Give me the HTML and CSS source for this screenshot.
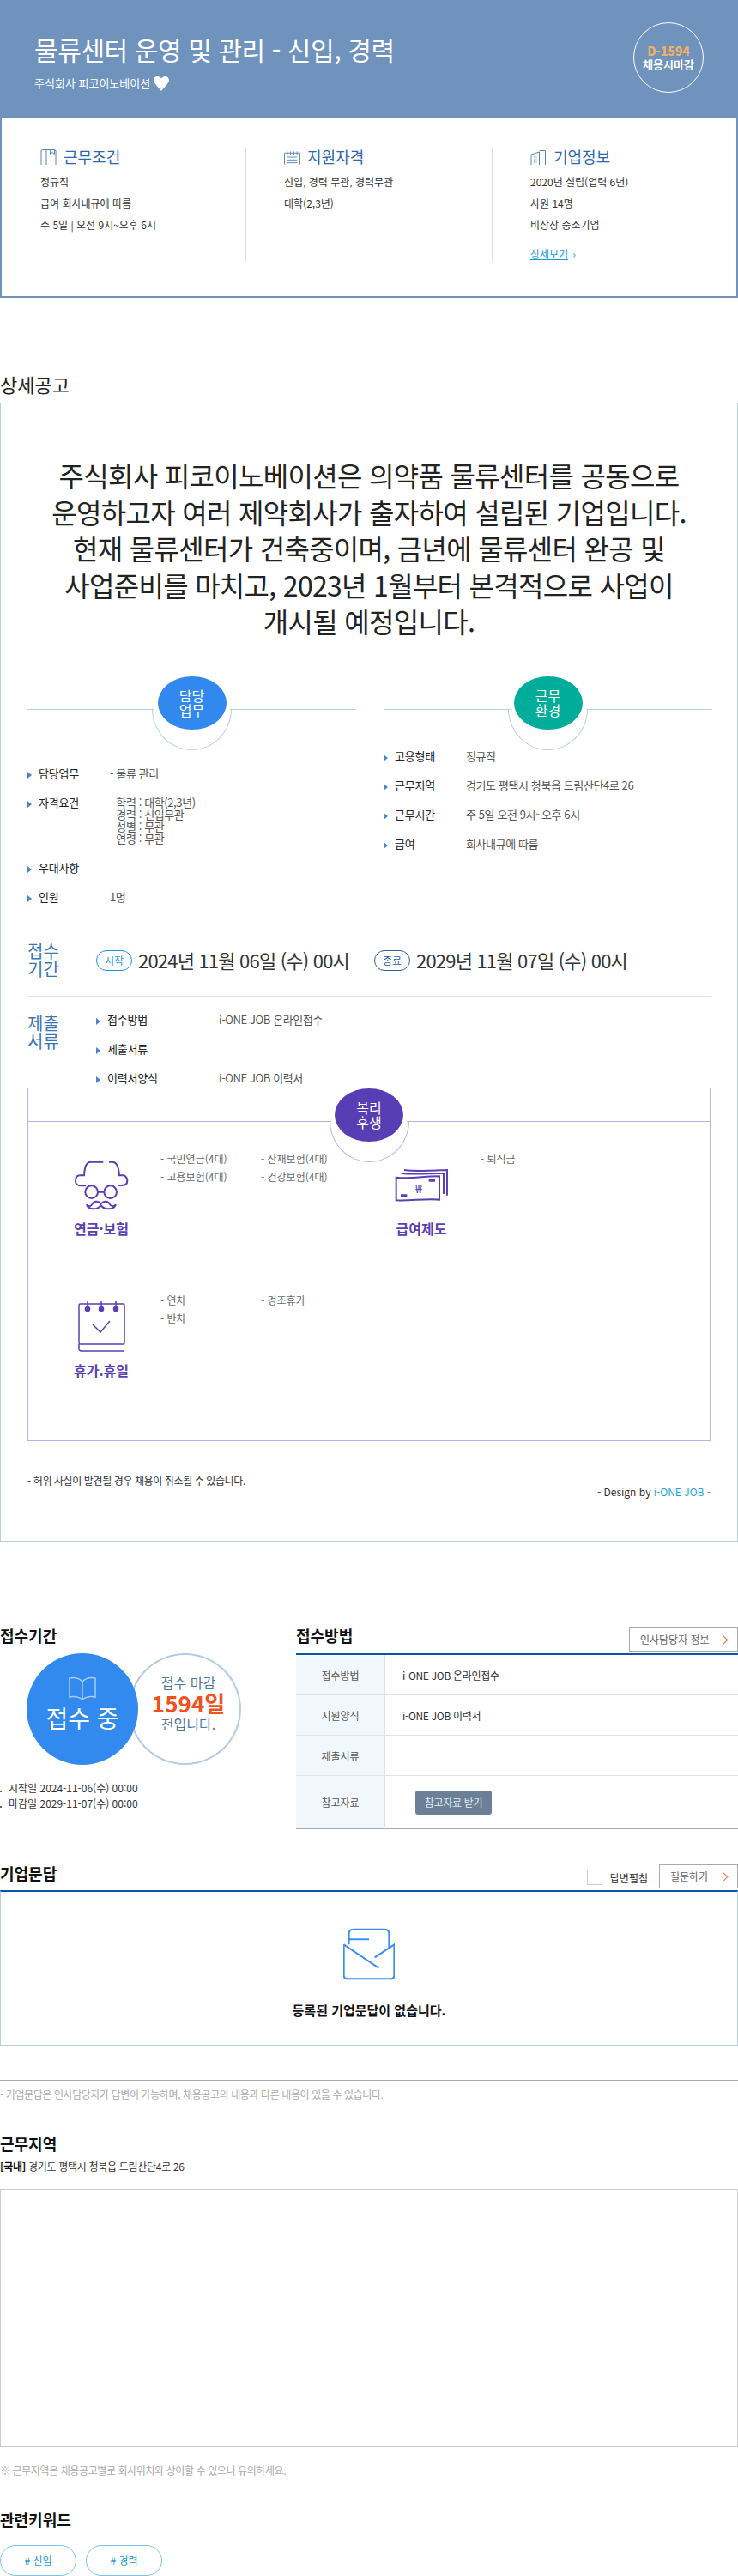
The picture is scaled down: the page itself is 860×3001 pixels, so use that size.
FILE: index.html
```html
<!DOCTYPE html>
<html lang="ko">
<head>
  <meta charset="UTF-8"/>
  <meta name="viewport" content="width=device-width,initial-scale=1.0"/>
  <title>물류센터 운영 및 관리 - 신입, 경력</title>
  <link rel="stylesheet" href="styles.css">
</head>
<body>

<header class="job-head">
  <div class="job-title">
    <h1>물류센터 운영 및 관리 - 신입, 경력</h1>
    <p class="company">주식회사 피코이노베이션
      <svg class="heart" viewBox="0 0 18 17"><path d="M9 17C6 13 0 8 0 4.500C0 1.800 2 0 4.500 0C6.500 0 8 1 9 2.500C10 1 11.500 0 13.500 0C16 0 18 1.800 18 4.500C18 8 12 13 9 17Z"/></svg>
    </p>
  </div>
  <div class="dday"><strong>D-1594</strong><span>채용시마감</span></div>
</header>

<section class="summary">
  <div class="summary-col">
    <h2>
      <svg class="sum-icon" viewBox="0 0 18 18"><path d="M.5 18V2Q.5.500 2 .500H16Q17.500.500 17.500 2V18M6.500.500V18M11 .500V5.500L13.500 3.500L16 5.500V.500"/></svg>
      근무조건
    </h2>
    <ul>
      <li>정규직</li>
      <li>급여 회사내규에 따름</li>
      <li>주 5일 | 오전 9시~오후 6시</li>
    </ul>
  </div>
  <div class="summary-col">
    <h2>
      <svg class="sum-icon" viewBox="0 0 20 18"><path d="M.5 18V4H19.500V18M4 2V6M8 2V6M12 2V6M16 2V6M4 9H16M4 12.500H16M4 16H16"/></svg>
      지원자격
    </h2>
    <ul>
      <li>신입, 경력 무관, 경력무관</li>
      <li>대학(2,3년)</li>
    </ul>
  </div>
  <div class="summary-col">
    <h2>
      <svg class="sum-icon" viewBox="0 0 18 18"><path d="M.5 18V6L10 3V18M10 1.500H17V18M3.500 9H4.500M6 9H7M3.500 12H4.500M6 12H7M3.500 15H4.500M6 15H7"/></svg>
      기업정보
    </h2>
    <ul>
      <li>2020년 설립(업력 6년)</li>
      <li>사원 14명</li>
      <li>비상장 중소기업</li>
    </ul>
    <a class="more" href="#">상세보기</a><span class="more-arrow">›</span>
  </div>
</section>

<h2 class="detail-title">상세공고</h2>
<section class="detail">
  <p class="lead">주식회사 피코이노베이션은 의약품 물류센터를 공동으로<br>운영하고자 여러 제약회사가 출자하여 설립된 기업입니다.<br>현재 물류센터가 건축중이며, 금년에 물류센터 완공 및<br>사업준비를 마치고, 2023년 1월부터 본격적으로 사업이<br>개시될 예정입니다.</p>

  <div class="duty-cols">
    <div class="duty">
      <div class="bubble-head">
        <span class="rule"></span>
        <span class="arc"></span>
        <span class="bubble">담당<br>업무</span>
        <span class="rule"></span>
      </div>
      <ul class="rows rows-left">
        <li><b>담당업무</b><span>- 물류 관리</span></li>
        <li><b>자격요건</b><span class="stack">- 학력 : 대학(2,3년)<br>- 경력 : 신입무관<br>- 성별 : 무관<br>- 연령 : 무관</span></li>
        <li><b>우대사항</b><span></span></li>
        <li><b>인원</b><span>1명</span></li>
      </ul>
    </div>
    <div class="duty">
      <div class="bubble-head">
        <span class="rule"></span>
        <span class="arc"></span>
        <span class="bubble bubble-teal">근무<br>환경</span>
        <span class="rule"></span>
      </div>
      <ul class="rows">
        <li><b>고용형태</b><span>정규직</span></li>
        <li><b>근무지역</b><span>경기도 평택시 청북읍 드림산단4로 26</span></li>
        <li><b>근무시간</b><span>주 5일 오전 9시~오후 6시</span></li>
        <li><b>급여</b><span>회사내규에 따름</span></li>
      </ul>
    </div>
  </div>

  <div class="period">
    <h3 class="side-label">접수<br>기간</h3>
    <span class="badge">시작</span>
    <span class="period-date">2024년 11월 06일 (수) 00시</span>
    <span class="badge badge-end">종료</span>
    <span class="period-date">2029년 11월 07일 (수) 00시</span>
  </div>

  <div class="docs">
    <h3 class="side-label">제출<br>서류</h3>
    <ul class="rows rows-docs">
      <li><b>접수방법</b><span>i-ONE JOB 온라인접수</span></li>
      <li><b>제출서류</b><span></span></li>
      <li><b>이력서양식</b><span>i-ONE JOB 이력서</span></li>
    </ul>
  </div>

  <div class="benefit">
    <div class="bubble-head bubble-head-purple">
      <span class="rule"></span>
      <span class="arc"></span>
      <span class="bubble bubble-purple">복리<br>후생</span>
      <span class="rule"></span>
    </div>
    <div class="benefit-grid">
      <div class="benefit-cell">
        <div class="benefit-type">
          <svg viewBox="0 0 120 82">
            <g transform="translate(3 2) scale(.3333)">
              <path d="M178 38H135C118 38 113 55 111 85H97C84 85 81 95 81 104C81 115 90 121 100 121H118M198 38H210C225 38 232 55 234 85H248C258 88 262 95 262 104C262 115 252 120 240 120H228"/>
              <circle cx="137" cy="143" r="22"/>
              <circle cx="203" cy="143" r="22"/>
              <path d="M159 143H181M170 184C160 172 145 175 140 185C135 195 125 195 120 187C125 205 155 208 170 190C185 208 215 205 222 187C215 195 205 195 200 185C195 175 180 172 170 184Z"/>
            </g>
          </svg>
          <strong>연금·보험</strong>
        </div>
        <ul class="benefit-list">
          <li>- 국민연금(4대)</li><li>- 산재보험(4대)</li>
          <li>- 고용보험(4대)</li><li>- 건강보험(4대)</li>
        </ul>
      </div>
      <div class="benefit-cell">
        <div class="benefit-type">
          <svg viewBox="0 0 120 82">
            <g transform="translate(10 2) scale(.3333)">
              <path d="M62 92C110 98 160 88 213 88V170C165 165 110 175 62 172ZM80 78C130 82 175 78 228 78V150M90 66C140 72 190 68 240 66V155"/>
              <path class="thick" d="M176 103H198M78 155H100"/>
              <text x="141" y="146" text-anchor="middle">₩</text>
            </g>
          </svg>
          <strong>급여제도</strong>
        </div>
        <ul class="benefit-list">
          <li>- 퇴직금</li>
        </ul>
      </div>
      <div class="benefit-cell">
        <div class="benefit-type">
          <svg viewBox="0 0 120 82">
            <rect x="34" y="15" width="53" height="47" rx="1.500"/>
            <path d="M34 62V67Q34 70 37 70H87M44 12V22M60 12V22M77 12V22M50 39L59 48L70 35"/>
            <circle class="dot" cx="44" cy="21" r="2.500"/>
            <circle class="dot" cx="60" cy="21" r="2.500"/>
            <circle class="dot" cx="77" cy="21" r="2.500"/>
          </svg>
          <strong>휴가.휴일</strong>
        </div>
        <ul class="benefit-list">
          <li>- 연차</li><li>- 경조휴가</li>
          <li>- 반차</li>
        </ul>
      </div>
    </div>
  </div>

  <div class="detail-foot">
    <p class="false-note">- 허위 사실이 발견될 경우 채용이 취소될 수 있습니다.</p>
    <p class="design">- Design by <em>i-ONE JOB -</em></p>
  </div>
</section>

<section class="apply">
  <div class="apply-period">
    <h2 class="sec-title">접수기간</h2>
    <div class="circles">
      <div class="circle-on">
        <svg class="book" viewBox="0 0 32 28"><path d="M16 6C12 2 6 1 1 2V24C6 23 12 24 16 27C20 24 26 23 31 24V2C26 1 20 2 16 6ZM16 6V27"/></svg>
        <span>접수 중</span>
      </div>
      <div class="circle-left">
        <span>접수 마감</span>
        <strong>1594일</strong>
        <span>전입니다.</span>
      </div>
    </div>
    <ul class="apply-dates">
      <li>시작일 2024-11-06(수) 00:00</li>
      <li>마감일 2029-11-07(수) 00:00</li>
    </ul>
  </div>
  <div class="apply-how">
    <div class="sec-head">
      <h2 class="sec-title">접수방법</h2>
      <a class="line-btn line-btn-wide" href="#">인사담당자 정보</a>
    </div>
    <table class="how-table">
      <tr><th>접수방법</th><td>i-ONE JOB 온라인접수</td></tr>
      <tr><th>지원양식</th><td>i-ONE JOB 이력서</td></tr>
      <tr><th>제출서류</th><td></td></tr>
      <tr class="row-file"><th>참고자료</th><td><a class="file-btn" href="#">참고자료 받기</a></td></tr>
    </table>
  </div>
</section>

<section class="qna">
  <div class="sec-head sec-head-qna">
    <h2 class="sec-title">기업문답</h2>
    <label class="fold"><span class="check"></span>답변펼침</label>
    <a class="line-btn" href="#">질문하기</a>
  </div>
  <div class="qna-empty">
    <svg class="mail" viewBox="60 42 180 186"><path d="M80 100V62Q80 47 95 47H205Q220 47 220 62V110M80 82H150M62 100L184 182M62 100V208Q62 220 75 220H225Q238 220 238 208V100L170 145"/></svg>
    <strong>등록된 기업문답이 없습니다.</strong>
  </div>
  <p class="note note-rule">- 기업문답은 인사담당자가 답변이 가능하며, 채용공고의 내용과 다른 내용이 있을 수 있습니다.</p>
</section>

<section class="area">
  <h2 class="sec-title">근무지역</h2>
  <p class="address"><b>[국내]</b> 경기도 평택시 청북읍 드림산단4로 26</p>
  <div class="map"></div>
  <p class="note">※ 근무지역은 채용공고별로 회사위치와 상이할 수 있으니 유의하세요.</p>
</section>

<section class="keywords">
  <h2 class="sec-title">관련키워드</h2>
  <div class="chips">
    <a class="chip" href="#"># 신입</a>
    <a class="chip" href="#"># 경력</a>
  </div>
</section>

</body>
</html>
```

FILE: styles.css
```css
* {
  margin: 0;
  padding: 0;
  box-sizing: border-box;
}

body {
  font-family: "Noto Sans CJK KR", "Noto Sans", sans-serif;
  background: #fff;
  color: #222;
  font-size: 12px;
  padding-bottom: 1px;
}

ul {
  list-style: none;
}

a {
  text-decoration: none;
  color: inherit;
}

/* top banner */
.job-head {
  display: flex;
  justify-content: space-between;
  align-items: flex-start;
  height: 137px;
  padding: 26px 40px 0;
  background: #6f93bc;
  color: #fff;
}

.job-title {
  padding-top: 11px;
}

.job-title h1 {
  font-size: 30px;
  font-weight: 400;
  letter-spacing: -.4px;
  line-height: 40px;
}

.company {
  display: flex;
  align-items: center;
  gap: 4px;
  margin-top: 11px;
  font-size: 13px;
  line-height: 18px;
}

.heart {
  width: 18px;
  height: 17px;
  fill: #fff;
}

.dday {
  display: flex;
  flex-direction: column;
  align-items: center;
  justify-content: center;
  width: 82px;
  height: 82px;
  border: 1px solid #fff;
  border-radius: 50%;
  font-size: 13px;
  font-weight: 700;
  line-height: 15px;
}

.dday strong {
  color: #f5b063;
  font-size: 14px;
}

/* summary box */
.summary {
  display: grid;
  grid-template-columns: 285px 287px 1fr;
  height: 210px;
  padding-top: 35px;
  border: 2px solid #6f93bc;
  border-top: 0;
}

.summary-col {
  height: 133px;
  padding-left: 44px;
  border-right: 1px solid #d5e0ea;
}

.summary-col:first-child {
  padding-left: 45px;
}

.summary-col:last-child {
  border-right: 0;
}

.summary-col h2 {
  display: flex;
  align-items: center;
  height: 20px;
  margin-bottom: 7px;
  font-size: 18px;
  font-weight: 400;
  color: #2f69ad;
}

.sum-icon {
  width: 19px;
  height: 18px;
  margin: 2px 8px 0 0;
  fill: none;
  stroke: #5a85b5;
  stroke-width: 1;
}

.summary-col li {
  line-height: 25px;
  color: #333;
}

.more {
  display: inline-block;
  margin-top: 13px;
  line-height: 17px;
  color: #1a9ad6;
  text-decoration: underline;
}

.more-arrow {
  margin-left: 5px;
  color: #1a9ad6;
}

/* detail */
.detail-title {
  margin: 86px 0 8px;
  font-size: 22px;
  font-weight: 400;
  line-height: 28px;
}

.detail {
  height: 1327px;
  padding: 62px 31px 0;
  border: 1px solid #b8cde0;
}

.lead {
  font-size: 32px;
  letter-spacing: -.7px;
  line-height: 42.500px;
  text-align: center;
  color: #222;
}

.duty-cols {
  display: grid;
  grid-template-columns: 383px 383px;
  gap: 32px;
  margin-top: 43px;
}

.bubble-head {
  position: relative;
  display: flex;
  justify-content: center;
  height: 76px;
}

.rule {
  flex: 1;
  height: 1px;
  margin-top: 38px;
  background: #b9cfe3;
}

.bubble {
  position: relative;
  display: flex;
  align-items: center;
  justify-content: center;
  width: 80px;
  height: 62px;
  margin: 0 4px;
  background: #3188ee;
  border-radius: 50%;
  color: #fff;
  font-size: 16px;
  line-height: 17px;
  text-align: center;
}

.arc {
  position: absolute;
  top: 38px;
  left: 50%;
  width: 93px;
  height: 48px;
  margin-left: -46.500px;
  border: 1px solid #b9cfe3;
  border-top: 0;
  border-radius: 0 0 46.500px 46.500px / 0 0 48px 48px;
}

.bubble-teal {
  background: #00ac9a;
}

.bubble-purple {
  background: #583eb4;
}

.rows li {
  position: relative;
  display: flex;
  padding-left: 13px;
  font-size: 13px;
  letter-spacing: -.2px;
  line-height: 34px;
}

.rows li::before {
  content: "";
  position: absolute;
  left: 0;
  top: 15px;
  border-left: 5px solid #4a86c5;
  border-top: 4.500px solid transparent;
  border-bottom: 4.500px solid transparent;
}

.rows b {
  flex: none;
  width: 83px;
  font-weight: 400;
  color: #222;
}

.rows span {
  letter-spacing: -.4px;
  color: #555;
}

.rows .stack {
  padding: 10px 0;
  line-height: 14px;
}

.rows-left {
  margin-top: 20px;
}

.side-label {
  flex: none;
  width: 80px;
  font-size: 20px;
  font-weight: 400;
  line-height: 21px;
  color: #3a78b5;
}

.period {
  display: flex;
  align-items: center;
  margin-top: 35px;
  padding-bottom: 21px;
  border-bottom: 1px solid #dbe5f0;
}

.badge {
  flex: none;
  width: 42px;
  height: 24px;
  margin-top: 2px;
  border: 1px solid #1a9ad6;
  border-radius: 12px;
  color: #1a9ad6;
  line-height: 22px;
  text-align: center;
}

.badge-end {
  margin-left: 31px;
  border-color: #2e5fa0;
  color: #2e5fa0;
}

.period-date {
  flex: none;
  width: 244px;
  margin-left: 7px;
  font-size: 22px;
  letter-spacing: -.8px;
  white-space: nowrap;
  color: #333;
}

.docs {
  display: flex;
  padding-top: 10px;
}

.docs .side-label {
  margin-top: 10px;
}

.rows-docs b {
  width: 130px;
}

/* benefit */
.benefit {
  height: 411px;
  margin-top: 16px;
  border: 1px solid #b9b4e2;
  border-top: 0;
}

.bubble-head-purple {
  height: 71px;
  margin-top: -21px;
}

.bubble-head-purple .rule {
  background: #b9b4e2;
}

.bubble-head-purple .arc {
  border-color: #b9b4e2;
}

.benefit-grid {
  display: grid;
  grid-template-columns: 373px 373px;
  grid-auto-rows: 165px;
  padding-left: 25px;
}

.benefit-cell {
  display: flex;
}

.benefit-type {
  flex: none;
  width: 120px;
  margin-right: 9px;
  text-align: center;
}

.benefit-type svg {
  display: block;
  width: 120px;
  height: 82px;
  fill: none;
  stroke: #5a3fb5;
  stroke-width: 1.500;
}

.benefit-type svg g {
  stroke-width: 6;
}

.benefit-type svg .thick {
  stroke-width: 9;
}

.benefit-type svg text {
  font-size: 40px;
  fill: #5a3fb5;
  stroke: none;
}

.benefit-type svg .dot {
  fill: #5a3fb5;
}

.benefit-type strong {
  display: block;
  font-size: 16px;
  line-height: 20px;
  color: #5a3fb5;
}

.benefit-list {
  display: grid;
  grid-template-columns: 117px 100px;
  align-content: start;
}

.benefit-list li {
  line-height: 21px;
  color: #666;
}

.detail-foot {
  display: flex;
  justify-content: space-between;
  padding-top: 37px;
  line-height: 18px;
  color: #333;
}

.false-note {
  letter-spacing: -.4px;
}

.design {
  margin-top: 13px;
}

.design em {
  font-style: normal;
  color: #1aa5e0;
}

/* apply */
.sec-title {
  font-size: 18px;
  font-weight: 700;
  line-height: 24px;
  color: #111;
}

.apply {
  display: grid;
  grid-template-columns: 345px 515px;
  margin-top: 97px;
}

.circles {
  display: flex;
  margin: 9px 0 0 31px;
}

.circle-on {
  position: relative;
  z-index: 1;
  display: flex;
  flex-direction: column;
  align-items: center;
  width: 130px;
  height: 130px;
  padding-top: 27px;
  background: #3289ee;
  border-radius: 50%;
  color: #fff;
  font-size: 28px;
  line-height: 36px;
}

.book {
  width: 32px;
  height: 28px;
  margin-bottom: 2px;
  fill: none;
  stroke: #a9ccf7;
  stroke-width: 1.500;
}

.circle-left {
  display: flex;
  flex-direction: column;
  align-items: center;
  width: 131px;
  height: 130px;
  margin-left: -11px;
  padding: 22px 0 0 8px;
  border: 2px solid #b5cbe3;
  border-radius: 50%;
  font-size: 16px;
  line-height: 20px;
  color: #4a7aa8;
}

.circle-left strong {
  font-size: 26px;
  line-height: 28px;
  color: #f0521f;
}

.apply-dates {
  margin-top: 18px;
}

.apply-dates li {
  position: relative;
  padding-left: 10px;
  line-height: 18px;
  color: #333;
}

.apply-dates li::before {
  content: "";
  position: absolute;
  left: 0;
  top: 12px;
  width: 2px;
  height: 2px;
  background: #666;
}

.sec-head {
  display: flex;
  justify-content: space-between;
  align-items: flex-start;
  height: 33px;
}

.line-btn {
  position: relative;
  display: block;
  width: 92px;
  height: 28px;
  margin-top: 3px;
  padding-left: 12px;
  border: 1px solid #aaa;
  line-height: 26px;
  color: #666;
}

.line-btn-wide {
  width: 127px;
}

.line-btn::after {
  content: "";
  position: absolute;
  right: 12px;
  top: 10px;
  width: 6px;
  height: 6px;
  border-top: 1px solid #f0703a;
  border-right: 1px solid #f0703a;
  transform: rotate(45deg);
}

.how-table {
  width: 100%;
  border-collapse: separate;
  border-spacing: 0;
  border-top: 2px solid #0a56a5;
  table-layout: fixed;
}

.how-table th,
.how-table td {
  height: 47px;
  border-bottom: 1px solid #dfe3e8;
}

.how-table th {
  width: 104px;
  background: #f0f7fd;
  border-right: 1px solid #dfe3e8;
  font-weight: 400;
  color: #555;
}

.how-table td {
  padding-left: 20px;
  letter-spacing: -.3px;
  color: #333;
}

.how-table .row-file th,
.how-table .row-file td {
  height: 62px;
  border-bottom-color: #aaa;
}

.file-btn {
  display: block;
  width: 89px;
  height: 28px;
  margin-left: 15px;
  background: #6b7f96;
  border-radius: 3px;
  color: #e4eaf0;
  line-height: 28px;
  text-align: center;
}

/* q&a */
.qna {
  margin-top: 39px;
}

.sec-head-qna {
  height: 32px;
}

.sec-head-qna .sec-title {
  margin-right: auto;
}

.sec-head-qna .line-btn {
  margin-top: 2px;
}

.fold {
  display: flex;
  align-items: center;
  gap: 9px;
  margin: 8px 13px 0 0;
  line-height: 17px;
  color: #333;
}

.check {
  width: 18px;
  height: 18px;
  border: 1px solid #ccc;
}

.qna-empty {
  display: flex;
  flex-direction: column;
  align-items: center;
  height: 181px;
  padding-top: 42px;
  border: 1px solid #b8cde0;
  border-top: 2px solid #0a56a5;
}

.mail {
  width: 60px;
  height: 62px;
  fill: none;
  stroke: #3c8fee;
  stroke-width: 6;
}

.qna-empty strong {
  margin-top: 23px;
  font-size: 15px;
  line-height: 22px;
  color: #111;
}

.note {
  letter-spacing: -.4px;
  line-height: 18px;
  color: #aaa;
}

.note-rule {
  margin-top: 40px;
  padding-top: 7px;
  border-top: 1px solid #aaa;
}

/* area */
.area {
  margin-top: 36px;
}

.address {
  margin-top: 6px;
  letter-spacing: -.3px;
  line-height: 18px;
  color: #333;
}

.address b {
  color: #111;
}

.map {
  height: 301px;
  margin: 17px 0 18px;
  border: 1px solid #ccc;
}

.keywords {
  margin-top: 36px;
}

.chips {
  display: flex;
  gap: 11px;
  margin-top: 18px;
}

.chip {
  width: 89px;
  height: 36px;
  border: 1px solid #7cc4ee;
  border-radius: 18px;
  color: #1a9ad6;
  line-height: 34px;
  text-align: center;
}
```
